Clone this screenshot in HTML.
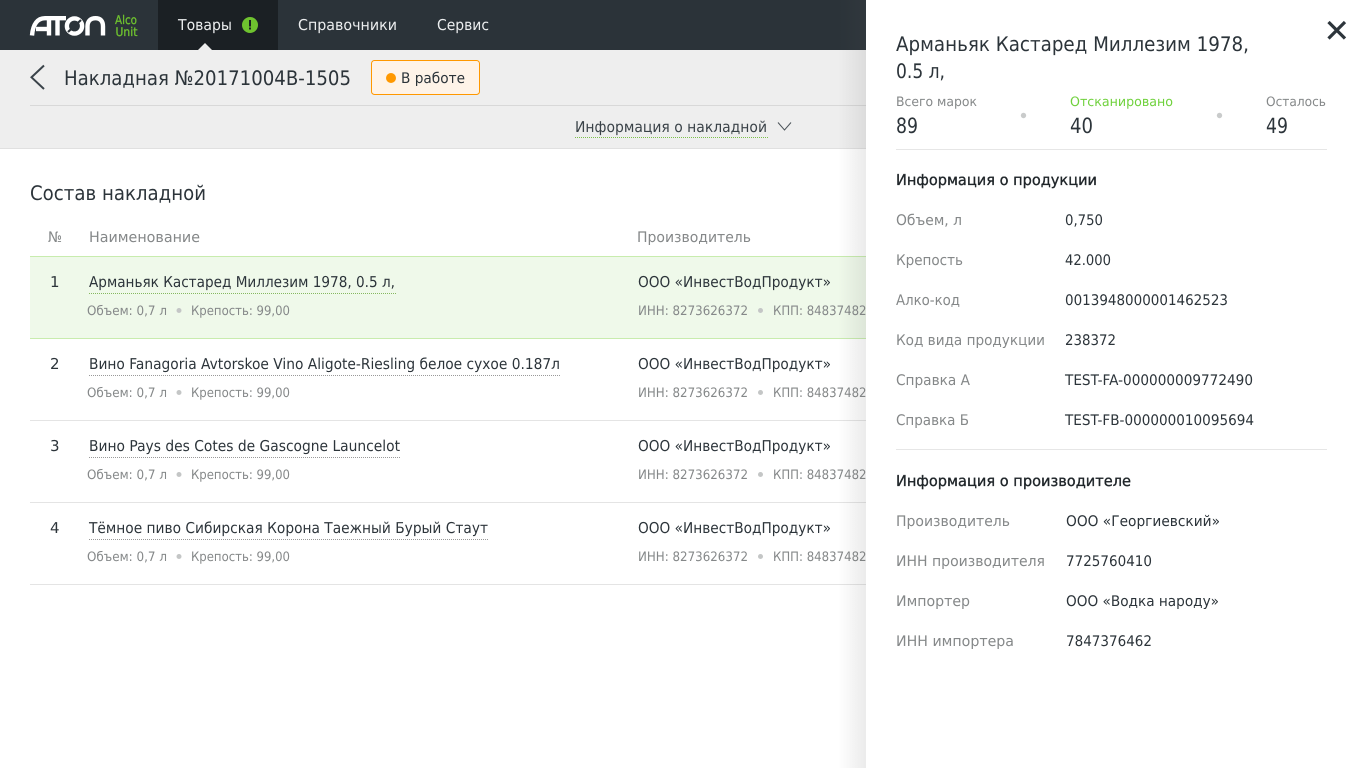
<!DOCTYPE html>
<html lang="ru"><head><meta charset="utf-8"><title>Накладная</title>
<style>
html,body{margin:0;padding:0;width:1366px;height:768px;overflow:hidden;background:#fff}
svg{position:absolute;left:0;top:0;display:block}
text{font-family:"DejaVu Sans","Liberation Sans",sans-serif;text-rendering:geometricPrecision}
.d{fill:#2c343a}.g{fill:#858889}.w{fill:#eceeef}
.s13{font-size:13px}.s14{font-size:14.6px}.s15{font-size:15px}.s20{font-size:20px}
.b{stroke:#1f2529;stroke-width:.35px}
.u{stroke-width:1;stroke-dasharray:1 1;fill:none}
</style></head><body>
<svg width="1366" height="768" viewBox="0 0 1366 768" xmlns="http://www.w3.org/2000/svg">
<defs><linearGradient id="sh" x1="0" x2="1" y1="0" y2="0"><stop offset="0" stop-color="#5a5a5a" stop-opacity="0"/><stop offset="1" stop-color="#5a5a5a" stop-opacity=".12"/></linearGradient></defs>
<rect width="1366" height="768" fill="#fff"/>
<rect width="1366" height="50" fill="#2b3339"/>
<rect x="158" width="120" height="50" fill="#1b2024"/>
<path d="M198 50l7-7 7 7z" fill="#eee"/>
<rect y="50" width="1366" height="98" fill="#eee"/>
<rect y="148" width="1366" height="1" fill="#e0e0e0"/>
<rect x="30" y="105" width="1336" height="1" fill="#d8d8d8"/>
<!-- logo -->
<g fill="none" stroke="#fff" stroke-width="4.4">
<path d="M32 35.500C33 24 37.500 18.200 45 18.200H49V35.500"/><path d="M36 29H48"/>
<path d="M49 18.200H66"/><path d="M57.500 18.200V35.500"/>
<circle cx="74.500" cy="26" r="7.600"/>
<path d="M87.500 35.500V26.500C87.500 20.500 91 18.200 95.500 18.200S103 20.500 103 26.500V35.500"/>
</g>
<path d="M68 32L81 20" stroke="#2b3339" stroke-width="2.200" fill="none"/>
<text x="115" y="24" textLength="22" lengthAdjust="spacingAndGlyphs" style="font-size:12px;stroke:#6fc32f;stroke-width:.3px" fill="#6fc32f">Alco</text>
<text x="115.500" y="36" textLength="22" lengthAdjust="spacingAndGlyphs" style="font-size:12px;stroke:#6fc32f;stroke-width:.3px" fill="#6fc32f">Unit</text>
<!-- nav -->
<text x="178" y="30" class="s15 w" textLength="54" lengthAdjust="spacingAndGlyphs">Товары</text>
<circle cx="250" cy="25" r="8" fill="#6fc32f"/><rect x="249" y="20" width="2" height="6.500" fill="#1b2024"/><rect x="249" y="27.500" width="2" height="2" fill="#1b2024"/>
<text x="298" y="30" class="s15 w" textLength="99" lengthAdjust="spacingAndGlyphs">Справочники</text>
<text x="437" y="30" class="s15 w" textLength="52" lengthAdjust="spacingAndGlyphs">Сервис</text>
<!-- sub header -->
<path d="M44 65.500L31.500 77.300L44 89" fill="none" stroke="#3a434a" stroke-width="2"/>
<text x="64" y="85" class="s20 d" textLength="287" lengthAdjust="spacingAndGlyphs">Накладная №20171004В-1505</text>
<rect x="371.500" y="60.500" width="108" height="34" rx="3" fill="#fef3e8" stroke="#ff9800"/>
<circle cx="391" cy="78" r="5" fill="#ff9800"/>
<text x="401" y="83" class="s14 d" textLength="64" lengthAdjust="spacingAndGlyphs">В работе</text>
<text x="575" y="132" class="s15" fill="#3a4248" textLength="192" lengthAdjust="spacingAndGlyphs">Информация о накладной</text>
<line x1="575" x2="768" y1="137.500" y2="137.500" class="u" stroke="#7cc04a"/>
<path d="M778 122.500L784.500 130L791 122.500" fill="none" stroke="#4a5258" stroke-width="1"/>
<!-- table -->
<text x="30" y="200" class="s20 d" textLength="176" lengthAdjust="spacingAndGlyphs">Состав накладной</text>
<text x="48" y="242" class="s14 g" textLength="14" lengthAdjust="spacingAndGlyphs">№</text>
<text x="89" y="242" class="s14 g" textLength="111" lengthAdjust="spacingAndGlyphs">Наименование</text>
<text x="637" y="242" class="s14 g" textLength="114" lengthAdjust="spacingAndGlyphs">Производитель</text>
<rect x="30" y="256" width="836" height="83" fill="#eff9ea"/>
<rect x="30" y="256" width="836" height="1" fill="#c8ecae"/>
<rect x="30" y="338" width="836" height="1" fill="#c8ecae"/>
<rect x="30" y="420" width="836" height="1" fill="#e4e4e4"/>
<rect x="30" y="502" width="836" height="1" fill="#e4e4e4"/>
<rect x="30" y="584" width="836" height="1" fill="#e4e4e4"/>

<text x="50" y="287" class="s15 d">1</text>
<text x="89" y="287" class="s15 d" textLength="306" lengthAdjust="spacingAndGlyphs">Арманьяк Кастаред Миллезим 1978, 0.5 л,</text>
<line x1="89" x2="396" y1="293.500" y2="293.500" class="u" stroke="#86b860"/>
<text x="87" y="315" class="s13 g" textLength="80" lengthAdjust="spacingAndGlyphs">Объем: 0,7 л</text><circle cx="179" cy="310.500" r="2.500" fill="#c4c6c6"/>
<text x="191" y="315" class="s13 g" textLength="99" lengthAdjust="spacingAndGlyphs">Крепость: 99,00</text>
<text x="638" y="287" class="s15 d" textLength="193" lengthAdjust="spacingAndGlyphs">ООО «ИнвестВодПродукт»</text>
<text x="638" y="315" class="s13 g" textLength="110" lengthAdjust="spacingAndGlyphs">ИНН: 8273626372</text><circle cx="760.500" cy="310.500" r="2.500" fill="#c4c6c6"/>
<text x="773" y="315" class="s13 g" textLength="101" lengthAdjust="spacingAndGlyphs">КПП: 848374821</text>

<text x="50" y="369" class="s15 d">2</text>
<text x="89" y="369" class="s15 d" textLength="471" lengthAdjust="spacingAndGlyphs">Вино Fanagoria Avtorskoe Vino Aligote-Riesling белое сухое 0.187л</text>
<line x1="89" x2="561" y1="375.500" y2="375.500" class="u" stroke="#999"/>
<text x="87" y="397" class="s13 g" textLength="80" lengthAdjust="spacingAndGlyphs">Объем: 0,7 л</text><circle cx="179" cy="392.500" r="2.500" fill="#c4c6c6"/>
<text x="191" y="397" class="s13 g" textLength="99" lengthAdjust="spacingAndGlyphs">Крепость: 99,00</text>
<text x="638" y="369" class="s15 d" textLength="193" lengthAdjust="spacingAndGlyphs">ООО «ИнвестВодПродукт»</text>
<text x="638" y="397" class="s13 g" textLength="110" lengthAdjust="spacingAndGlyphs">ИНН: 8273626372</text><circle cx="760.500" cy="392.500" r="2.500" fill="#c4c6c6"/>
<text x="773" y="397" class="s13 g" textLength="101" lengthAdjust="spacingAndGlyphs">КПП: 848374821</text>

<text x="50" y="451" class="s15 d">3</text>
<text x="89" y="451" class="s15 d" textLength="311" lengthAdjust="spacingAndGlyphs">Вино Pays des Cotes de Gascogne Launcelot</text>
<line x1="89" x2="401" y1="457.500" y2="457.500" class="u" stroke="#999"/>
<text x="87" y="479" class="s13 g" textLength="80" lengthAdjust="spacingAndGlyphs">Объем: 0,7 л</text><circle cx="179" cy="474.500" r="2.500" fill="#c4c6c6"/>
<text x="191" y="479" class="s13 g" textLength="99" lengthAdjust="spacingAndGlyphs">Крепость: 99,00</text>
<text x="638" y="451" class="s15 d" textLength="193" lengthAdjust="spacingAndGlyphs">ООО «ИнвестВодПродукт»</text>
<text x="638" y="479" class="s13 g" textLength="110" lengthAdjust="spacingAndGlyphs">ИНН: 8273626372</text><circle cx="760.500" cy="474.500" r="2.500" fill="#c4c6c6"/>
<text x="773" y="479" class="s13 g" textLength="101" lengthAdjust="spacingAndGlyphs">КПП: 848374821</text>

<text x="50" y="533" class="s15 d">4</text>
<text x="89" y="533" class="s15 d" textLength="399" lengthAdjust="spacingAndGlyphs">Тёмное пиво Сибирская Корона Таежный Бурый Стаут</text>
<line x1="89" x2="489" y1="539.500" y2="539.500" class="u" stroke="#999"/>
<text x="87" y="561" class="s13 g" textLength="80" lengthAdjust="spacingAndGlyphs">Объем: 0,7 л</text><circle cx="179" cy="556.500" r="2.500" fill="#c4c6c6"/>
<text x="191" y="561" class="s13 g" textLength="99" lengthAdjust="spacingAndGlyphs">Крепость: 99,00</text>
<text x="638" y="533" class="s15 d" textLength="193" lengthAdjust="spacingAndGlyphs">ООО «ИнвестВодПродукт»</text>
<text x="638" y="561" class="s13 g" textLength="110" lengthAdjust="spacingAndGlyphs">ИНН: 8273626372</text><circle cx="760.500" cy="556.500" r="2.500" fill="#c4c6c6"/>
<text x="773" y="561" class="s13 g" textLength="101" lengthAdjust="spacingAndGlyphs">КПП: 848374821</text>

<!-- panel -->
<rect x="838" y="0" width="28" height="768" fill="url(#sh)"/>
<rect x="866" y="0" width="500" height="768" fill="#fff"/>
<text x="896" y="51" class="s20 d" textLength="353" lengthAdjust="spacingAndGlyphs">Арманьяк Кастаред Миллезим 1978,</text>
<text x="896" y="78" class="s20 d" textLength="49" lengthAdjust="spacingAndGlyphs">0.5 л,</text>
<path d="M1328.500 22L1345 38.500M1345 22L1328.500 38.500" stroke="#2d353b" stroke-width="3.200" fill="none"/>
<text x="896" y="106" class="s13 g" textLength="81" lengthAdjust="spacingAndGlyphs">Всего марок</text>
<text x="1070" y="106" class="s13" fill="#6fd13c" textLength="103" lengthAdjust="spacingAndGlyphs">Отсканировано</text>
<text x="1266" y="106" class="s13 g" textLength="60" lengthAdjust="spacingAndGlyphs">Осталось</text>
<text x="896" y="133" class="d" style="font-size:21px" textLength="22" lengthAdjust="spacingAndGlyphs">89</text>
<text x="1070" y="133" class="d" style="font-size:21px" textLength="23" lengthAdjust="spacingAndGlyphs">40</text>
<text x="1266" y="133" class="d" style="font-size:21px" textLength="22" lengthAdjust="spacingAndGlyphs">49</text>
<circle cx="1023.500" cy="115.500" r="2.700" fill="#c9cbcb"/><circle cx="1219.500" cy="115.500" r="2.700" fill="#c9cbcb"/>
<rect x="896" y="149" width="431" height="1" fill="#e6e6e6"/>
<text x="896" y="185" class="s15 b" fill="#1f2529" textLength="201" lengthAdjust="spacingAndGlyphs">Информация о продукции</text>

<text x="896" y="225" class="s14 g" textLength="66" lengthAdjust="spacingAndGlyphs">Объем, л</text>
<text x="1065" y="225" class="s14 d" textLength="38" lengthAdjust="spacingAndGlyphs">0,750</text>
<text x="896" y="265" class="s14 g" textLength="67" lengthAdjust="spacingAndGlyphs">Крепость</text>
<text x="1065" y="265" class="s14 d" textLength="46" lengthAdjust="spacingAndGlyphs">42.000</text>
<text x="896" y="305" class="s14 g" textLength="64" lengthAdjust="spacingAndGlyphs">Алко-код</text>
<text x="1065" y="305" class="s14 d" textLength="163" lengthAdjust="spacingAndGlyphs">0013948000001462523</text>
<text x="896" y="345" class="s14 g" textLength="149" lengthAdjust="spacingAndGlyphs">Код вида продукции</text>
<text x="1065" y="345" class="s14 d" textLength="51" lengthAdjust="spacingAndGlyphs">238372</text>
<text x="896" y="385" class="s14 g" textLength="74" lengthAdjust="spacingAndGlyphs">Справка А</text>
<text x="1065" y="385" class="s14 d" textLength="188" lengthAdjust="spacingAndGlyphs">TEST-FA-000000009772490</text>
<text x="896" y="425" class="s14 g" textLength="73" lengthAdjust="spacingAndGlyphs">Справка Б</text>
<text x="1065" y="425" class="s14 d" textLength="189" lengthAdjust="spacingAndGlyphs">TEST-FB-000000010095694</text>
<rect x="896" y="449" width="431" height="1" fill="#e6e6e6"/>
<text x="896" y="486" class="s15 b" fill="#1f2529" textLength="235" lengthAdjust="spacingAndGlyphs">Информация о производителе</text>

<text x="896" y="526" class="s14 g" textLength="114" lengthAdjust="spacingAndGlyphs">Производитель</text>
<text x="1066" y="526" class="s14 d" textLength="154" lengthAdjust="spacingAndGlyphs">ООО «Георгиевский»</text>
<text x="896" y="566" class="s14 g" textLength="149" lengthAdjust="spacingAndGlyphs">ИНН производителя</text>
<text x="1066" y="566" class="s14 d" textLength="86" lengthAdjust="spacingAndGlyphs">7725760410</text>
<text x="896" y="606" class="s14 g" textLength="74" lengthAdjust="spacingAndGlyphs">Импортер</text>
<text x="1066" y="606" class="s14 d" textLength="153" lengthAdjust="spacingAndGlyphs">ООО «Водка народу»</text>
<text x="896" y="646" class="s14 g" textLength="118" lengthAdjust="spacingAndGlyphs">ИНН импортера</text>
<text x="1066" y="646" class="s14 d" textLength="86" lengthAdjust="spacingAndGlyphs">7847376462</text>
</svg>
</body></html>
